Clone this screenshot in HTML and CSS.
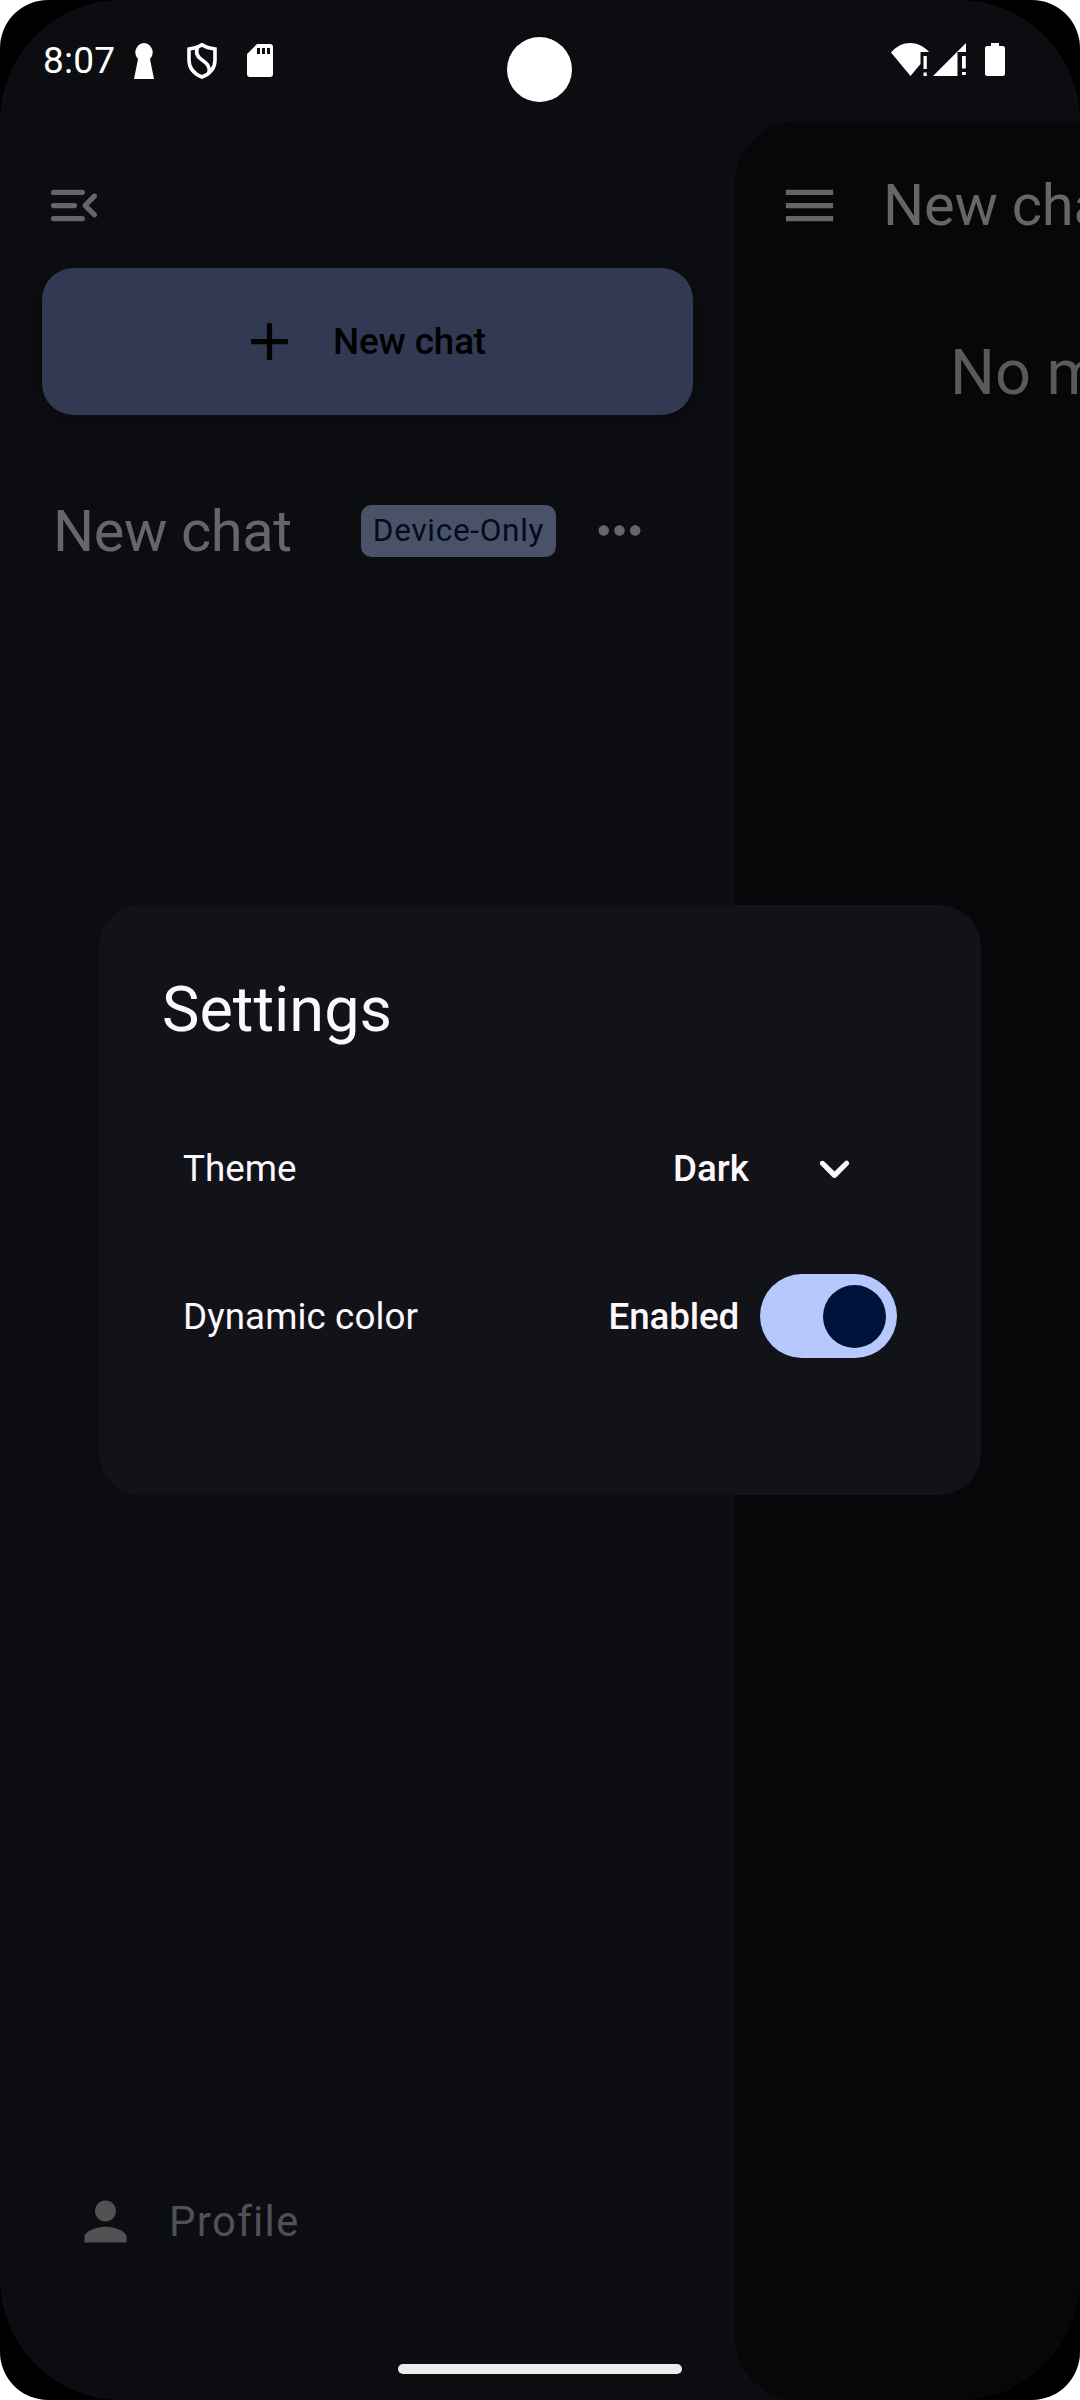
FILE: index.html
```html
<!DOCTYPE html>
<html lang="en">
<head>
<meta charset="utf-8">
<title>Settings</title>
<link rel="stylesheet" href="styles.css">
</head>
<body>
<div class="device">
  <div class="screen">
    <header class="status">
      <span class="clock">8:07</span>
      <svg class="ic-key" width="20" height="36" viewBox="0 0 20 36"><path d="M10 0a9.500 9.500 0 0 1 6 16L20 36H0L4 16A9.500 9.500 0 0 1 10 0z"/></svg>
      <svg class="ic-shield" width="30" height="36" viewBox="0 0 30 36"><path d="M15 1.800C11.500 4.300 6.500 5.500 2 6V17c0 8 5.500 14 13 17C22.500 31 28 25 28 17V6C23.500 5.500 18.500 4.300 15 1.800z"/><path d="M11 3.500C8 9 9.500 13 14.500 16.500c5.500 3.800 8.500 7 7.500 12.500"/></svg>
      <svg class="ic-sd" width="26" height="33" viewBox="0 0 26 33"><path fill-rule="evenodd" d="M10 0h13a3 3 0 0 1 3 3v27a3 3 0 0 1-3 3H3a3 3 0 0 1-3-3V10zM10 4v6h3V4zM15 4v6h3V4zM20 4v6h3V4z"/></svg>
      <span class="spacer"></span>
      <svg width="38" height="33" viewBox="0 0 38 33"><path d="M0 9.500C11-3 27-3 38 9H29.500V21L19.500 33z"/><path d="M32.500 13h3.300v13h-3.300zM32.500 29.500h3.300V33h-3.300z"/></svg>
      <svg class="ic-signal" width="33" height="33" viewBox="0 0 33 33"><path d="M0 33 33 0V9H24.500V33z"/><path d="M29 13h3.800v12.500H29zM29 29h3.800v3H29z"/></svg>
      <svg class="ic-battery" width="20" height="33" viewBox="0 0 20 33"><path d="M6 0h8v3h3.500A2.500 2.500 0 0 1 20 5.500v25a2.500 2.500 0 0 1-2.500 2.500h-15A2.500 2.500 0 0 1 0 30.500v-25A2.500 2.500 0 0 1 2.500 3H6z"/></svg>
    </header>
    <div class="content">
      <aside class="drawer">
        <svg class="ic-menu-open" width="63" height="63" viewBox="0 0 24 24"><path d="M4 18h11c.55 0 1-.45 1-1s-.45-1-1-1H4c-.55 0-1 .45-1 1s.45 1 1 1zm0-5h8c.55 0 1-.45 1-1s-.45-1-1-1H4c-.55 0-1 .45-1 1s.45 1 1 1zM3 7c0 .55.45 1 1 1h11c.55 0 1-.45 1-1s-.45-1-1-1H4c-.55 0-1 .45-1 1zm17.300 7.880L17.420 12l2.880-2.880c.39-.39.39-1.020 0-1.410-.39-.39-1.020-.39-1.410 0L15.300 11.300c-.39.39-.39 1.020 0 1.410l3.590 3.590c.39.39 1.020.39 1.410 0 .38-.39.39-1.030 0-1.420z"/></svg>
        <div class="new-chat">
          <svg width="63" height="63" viewBox="0 0 24 24"><path d="M19 13h-6v6h-2v-6H5v-2h6V5h2v6h6v2z"/></svg>
          <span>New chat</span>
        </div>
        <div class="chat-row">
          <span class="chat-name">New chat</span>
          <span class="badge">Device-Only</span>
          <svg width="63" height="63" viewBox="0 0 24 24"><path d="M6 10c-1.100 0-2 .9-2 2s.9 2 2 2 2-.9 2-2-.9-2-2-2zm12 0c-1.100 0-2 .9-2 2s.9 2 2 2 2-.9 2-2-.9-2-2-2zm-6 0c-1.100 0-2 .9-2 2s.9 2 2 2 2-.9 2-2-.9-2-2-2z"/></svg>
        </div>
        <div class="profile">
          <svg width="63" height="63" viewBox="0 0 24 24"><path d="M12 12c2.210 0 4-1.790 4-4s-1.790-4-4-4-4 1.790-4 4 1.790 4 4 4zm0 2c-2.670 0-8 1.340-8 4v2h16v-2c0-2.660-5.330-4-8-4z"/></svg>
          <span>Profile</span>
        </div>
      </aside>
      <main class="panel">
        <div class="topbar">
          <svg width="63" height="63" viewBox="0 0 24 24"><path d="M3 18h18v-2H3v2zm0-5h18v-2H3v2zm0-7v2h18V6H3z"/></svg>
          <span>New chat</span>
        </div>
        <p class="empty">No messages</p>
      </main>
    </div>
  </div>
  <div class="camera"></div>
  <section class="dialog">
    <h1>Settings</h1>
    <div class="setting">
      <span class="label">Theme</span>
      <span class="value">Dark</span>
      <svg class="chevron" width="63" height="63" viewBox="0 0 24 24"><path d="M8.120 9.290 12 13.170l3.880-3.880c.39-.39 1.020-.39 1.410 0 .39.39.39 1.020 0 1.410l-4.590 4.590c-.39.39-1.020.39-1.410 0L6.700 10.700c-.39-.39-.39-1.020 0-1.410.39-.38 1.030-.39 1.420 0z"/></svg>
    </div>
    <div class="setting">
      <span class="label label-wide">Dynamic color</span>
      <span class="value value-tight">Enabled</span>
      <span class="switch"><span class="thumb"></span></span>
    </div>
  </section>
  <div class="home-bar"></div>
</div>
</body>
</html>
```
FILE: styles.css
```css
* { box-sizing: border-box; }
body { margin: 0; background: #fff; font-family: Roboto, sans-serif; }
svg { display: block; flex: none; fill: currentColor; }
span, h1, p { white-space: nowrap; }

.device {
  position: relative;
  width: 1080px;
  height: 2400px;
  background: #000;
  border-radius: 48px;
  overflow: hidden;
}
.screen {
  display: flex;
  flex-direction: column;
  height: 2400px;
  background: #0c0d11;
  border-radius: 121px;
  overflow: hidden;
}

.status {
  display: flex;
  align-items: flex-start;
  height: 121px;
  padding: 43px 75px 0 43px;
  color: #fff;
}
.clock { width: 91px; margin-top: -4px; font-size: 37px; line-height: 43px; letter-spacing: 0.2px; }
.ic-shield { margin-left: 33px; fill: none; stroke: currentColor; stroke-width: 3.6; }
.ic-sd { margin: 1px 0 0 30px; }
.spacer { flex: 1; }
.ic-signal { margin-left: 4px; }
.ic-battery { margin-left: 19px; }

.content { display: flex; flex: 1; }
.drawer {
  display: flex;
  flex-direction: column;
  width: 735px;
  padding: 53px 42px 147px;
  color: #666568;
}
.ic-menu-open { margin-left: 1px; }
.new-chat {
  display: flex;
  align-items: center;
  justify-content: center;
  gap: 32px;
  height: 147px;
  margin-top: 31px;
  padding-right: 11px;
  border-radius: 31.5px;
  background: #323952;
  color: #000;
  font-size: 36.75px;
  font-weight: 500;
  letter-spacing: -0.1px;
  box-shadow: 0 4px 16px #0c0b0e;
}
.chat-row {
  display: flex;
  align-items: center;
  height: 105px;
  margin-top: 63px;
  padding-left: 11px;
}
.chat-name { width: 308px; font-size: 57.75px; letter-spacing: -0.4px; }
.badge {
  width: 195px;
  height: 52px;
  margin-right: 32px;
  border-radius: 10.5px;
  background: #4a5267;
  color: #000c20;
  font-size: 31.5px;
  line-height: 51px;
  letter-spacing: 0.7px;
  text-align: center;
}
.profile {
  display: flex;
  align-items: center;
  gap: 32px;
  margin-top: auto;
  padding-left: 32px;
  height: 63px;
  color: #515154;
  font-size: 42px;
  letter-spacing: 1.3px;
}

.panel {
  flex: 1;
  min-width: 0;
  padding: 53px 0 0 43px;
  border-radius: 63px 0 0 63px;
  background: #060709;
  color: #666568;
  overflow: hidden;
}
.topbar { display: flex; align-items: center; gap: 42px; height: 63px; font-size: 57.75px; line-height: 66px; letter-spacing: -0.2px; }
.topbar span { margin-top: -2px; }
.empty { margin: 99px 0 0 172px; color: #5a595b; font-size: 63px; line-height: 74px; }

.camera {
  position: absolute;
  left: 507px;
  top: 37px;
  width: 65px;
  height: 65px;
  border-radius: 50%;
  background: #fff;
  box-shadow: 0 -1px 0 #000;
}

.dialog {
  position: absolute;
  left: 99px;
  top: 905px;
  width: 882px;
  height: 590px;
  padding: 63px;
  border-radius: 42px;
  background: #121318;
  color: #fdf8fd;
}
.dialog h1 { margin: 5px 0 58px; font-size: 63px; font-weight: 400; line-height: 74px; }
.setting {
  display: flex;
  align-items: center;
  height: 126px;
  margin: 0 21px 22px;
  font-size: 36.75px;
}
.label { flex: 1; }
.label-wide { letter-spacing: 0.1px; }
.value { font-weight: 500; }
.value-tight { letter-spacing: -0.15px; }
.chevron { margin: 0 31px 0 54px; }
.switch {
  display: flex;
  justify-content: flex-end;
  width: 137px;
  height: 84px;
  margin-left: 21px;
  padding: 11px 11px 10px;
  border-radius: 42px;
  background: #b7c8ff;
}
.thumb { width: 63px; height: 63px; border-radius: 50%; background: #00123a; }

.home-bar {
  position: absolute;
  left: 398px;
  top: 2364px;
  width: 284px;
  height: 10px;
  border-radius: 5px;
  background: #ececec;
}
```
